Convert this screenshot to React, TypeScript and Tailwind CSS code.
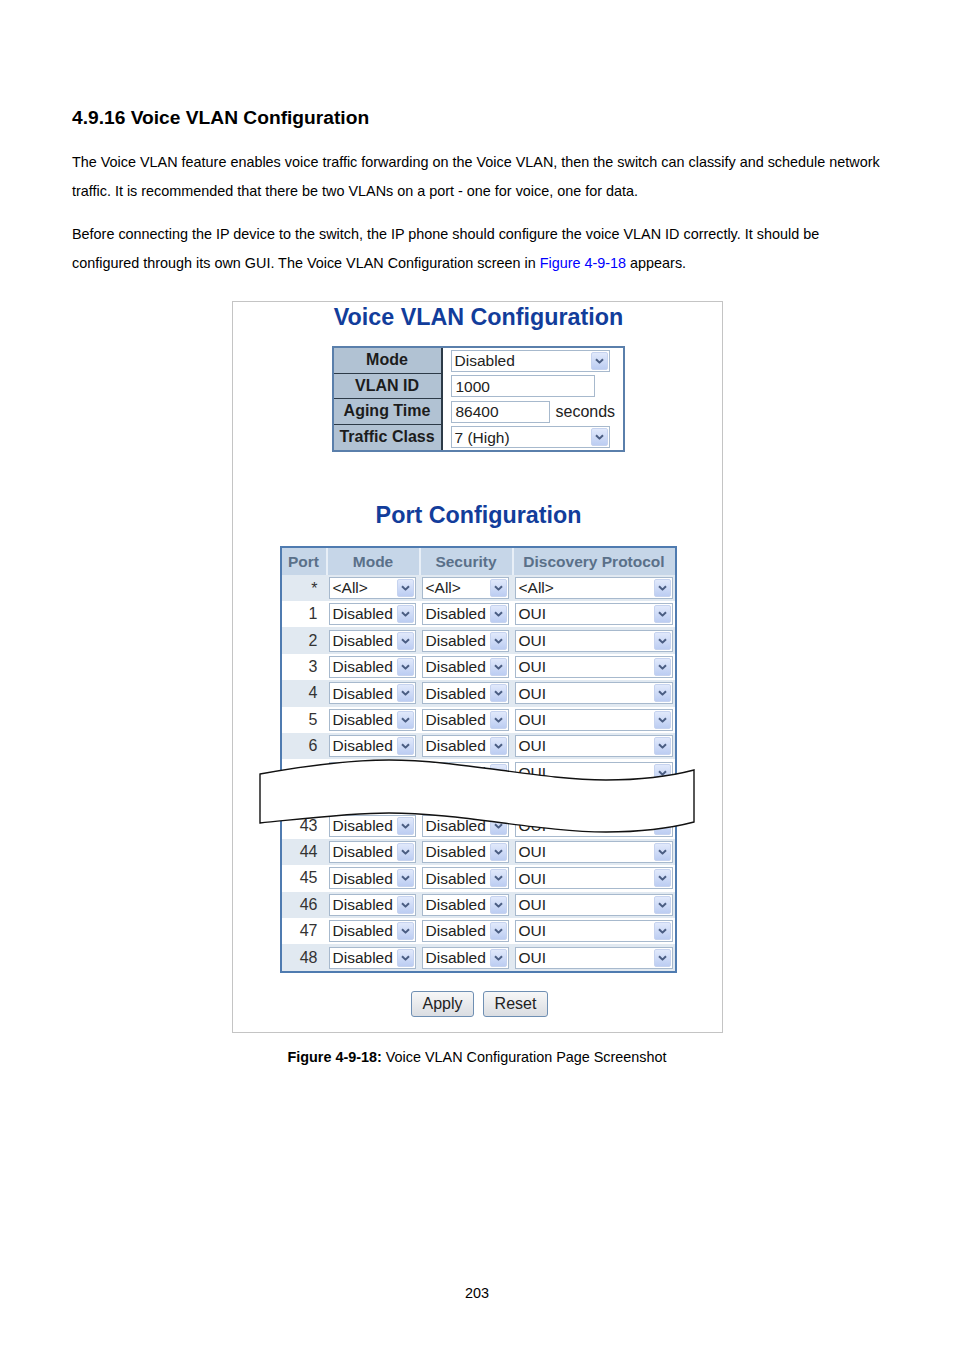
import React from 'react';

const FONT = { fontFamily: '"Liberation Sans", Arial, sans-serif' };

function Chevron() {
  return (
    <svg width="9" height="6" viewBox="0 0 9 6" fill="none">
      <path d="M1 1.2 L4.5 4.6 L8 1.2" stroke="#4a5d82" strokeWidth="2" strokeLinejoin="round" />
    </svg>
  );
}

// fake select box with the IE-style blue arrow button
function Select({ value, width }: { value: string; width: string }) {
  return (
    <div className={`${width} h-[22px] flex items-center justify-between border border-[#a7b9cd] bg-white`}>
      <span className="pl-[3px] text-[15.5px] leading-none text-[#222] whitespace-nowrap">{value}</span>
      <div className="mr-[1px] flex h-[18px] w-[17px] items-center justify-center rounded-[2px] border border-[#c6d3ef] bg-gradient-to-b from-[#e1e9fb] to-[#bccdf2]">
        <Chevron />
      </div>
    </div>
  );
}

function TextBox({ value, width }: { value: string; width: string }) {
  return (
    <div className={`${width} h-[22px] flex items-center border border-[#a7b9cd] bg-white`}>
      <span className="pl-[4px] text-[15.5px] leading-none text-[#222]">{value}</span>
    </div>
  );
}

function VoiceTable() {
  const rows = ['Mode', 'VLAN ID', 'Aging Time', 'Traffic Class'];
  return (
    <div className="ml-[99px] mt-[14px] flex w-[293px] border-2 border-[#5a7fab]">
      <div className="w-[109px] border-r-2 border-[#2c3a47] bg-[#b1c2d3]">
        {rows.map((r, i) => (
          <div
            key={r}
            className={`flex h-[25.5px] items-center justify-center text-[16px] font-bold text-[#1c1c1c] ${i < 3 ? 'border-b-[1.5px] border-[#2c3a47]' : ''}`}
          >
            {r}
          </div>
        ))}
      </div>
      <div className="flex-1 bg-white pl-[8px]">
        <div className="flex h-[25.5px] items-center">
          <Select value="Disabled" width="w-[159px]" />
        </div>
        <div className="flex h-[25.5px] items-center">
          <TextBox value="1000" width="w-[144px]" />
        </div>
        <div className="flex h-[25.5px] items-center">
          <TextBox value="86400" width="w-[99px]" />
          <span className="ml-[6px] text-[16px] text-[#222]">seconds</span>
        </div>
        <div className="flex h-[25.5px] items-center">
          <Select value="7 (High)" width="w-[159px]" />
        </div>
      </div>
    </div>
  );
}

const ports = ['*', '1', '2', '3', '4', '5', '6', '7', '8', '43', '44', '45', '46', '47', '48'];

function PortTable() {
  return (
    <div className="ml-[47px] mt-[16px] w-[397px] border-2 border-[#4f7bb0]">
      {/* header */}
      <div className="flex h-[26.5px] bg-[#c6d6e8] text-[15.5px] font-bold text-[#5a7089]">
        <div className="flex w-[44px] items-center justify-center">Port</div>
        <div className="flex w-[93px] items-center justify-center border-l-2 border-[#e8eff7]">Mode</div>
        <div className="flex w-[93px] items-center justify-center border-l-2 border-[#e8eff7]">Security</div>
        <div className="flex flex-1 items-center justify-center border-l-2 border-[#e8eff7]">Discovery Protocol</div>
      </div>
      {ports.map((p, i) => {
        const all = p === '*';
        const shade = i % 2 === 0;
        return (
          <div key={p} className={`flex h-[26.43px] items-center ${shade ? 'bg-[#e1e9f1]' : 'bg-white'}`}>
            <div className={`w-[44px] pr-[8px] text-right text-[16px] text-[#333] ${all ? 'pt-[2px] text-[12px]' : ''}`}>{p}</div>
            <div className="flex w-[93px] justify-center">
              <Select value={all ? '<All>' : 'Disabled'} width="w-[87px]" />
            </div>
            <div className="flex w-[93px] justify-center">
              <Select value={all ? '<All>' : 'Disabled'} width="w-[87px]" />
            </div>
            <div className="flex flex-1 pl-[3px]">
              <Select value={all ? '<All>' : 'OUI'} width="w-[158px]" />
            </div>
          </div>
        );
      })}
    </div>
  );
}

function WaveBreak() {
  return (
    <svg className="absolute left-[26px] top-[455px]" width="436" height="80" viewBox="-1 0 436 80">
      <path
        d="M0,17 C50,8 90,3 129,3 C200,3 280,23 346,23 C390,23 415,18 434,13 L434,65 C415,70 390,75 346,75 C280,75 200,56 129,56 C90,56 50,61 0,66 Z"
        fill="white"
        stroke="#111"
        strokeWidth="1.4"
      />
    </svg>
  );
}

function Button({ label, width }: { label: string; width: string }) {
  return (
    <div className={`${width} flex h-[26px] items-center justify-center rounded-[3px] border border-[#6f8fb3] bg-gradient-to-b from-[#f7f7f7] to-[#dadde2] text-[16px] text-[#222]`}>
      {label}
    </div>
  );
}

export default function App() {
  return (
    <div className="min-h-[1350px] w-[954px] bg-white text-black" style={FONT}>
      <div className="pt-[106px] pl-[72px]">
        <h1 className="text-[19.2px] font-bold leading-[24px]">4.9.16 Voice VLAN Configuration</h1>
        <p className="mt-[18px] text-[14.4px] leading-[28.5px]">
          The Voice VLAN feature enables voice traffic forwarding on the Voice VLAN, then the switch can classify and schedule network
          <br />
          traffic. It is recommended that there be two VLANs on a port - one for voice, one for data.
        </p>
        <p className="mt-[15px] text-[14.4px] leading-[28.5px]">
          Before connecting the IP device to the switch, the IP phone should configure the voice VLAN ID correctly. It should be
          <br />
          configured through its own GUI. The Voice VLAN Configuration screen in <span className="text-[#0000ff]">Figure 4-9-18</span> appears.
        </p>
      </div>

      {/* figure */}
      <div className="relative mx-auto mt-[24px] w-[491px] border border-[#c4c4c4] pb-[15px]">
        <h2 className="pl-[3px] text-center text-[23.3px] font-bold leading-[30px] text-[#123d9b]">Voice VLAN Configuration</h2>
        <VoiceTable />
        <h2 className="mt-[48px] pl-[3px] text-center text-[23.3px] font-bold leading-[30px] text-[#123d9b]">Port Configuration</h2>
        <PortTable />
        <div className="mt-[18px] flex justify-center gap-[9px] pl-[5px]">
          <Button label="Apply" width="w-[63px]" />
          <Button label="Reset" width="w-[65px]" />
        </div>
        <WaveBreak />
      </div>

      <p className="mt-[14px] text-center text-[14.4px] leading-[20px]">
        <span className="font-bold">Figure 4-9-18:</span> Voice VLAN Configuration Page Screenshot
      </p>
      <p className="mt-[216px] text-center text-[14.4px] leading-[20px]">203</p>
    </div>
  );
}
